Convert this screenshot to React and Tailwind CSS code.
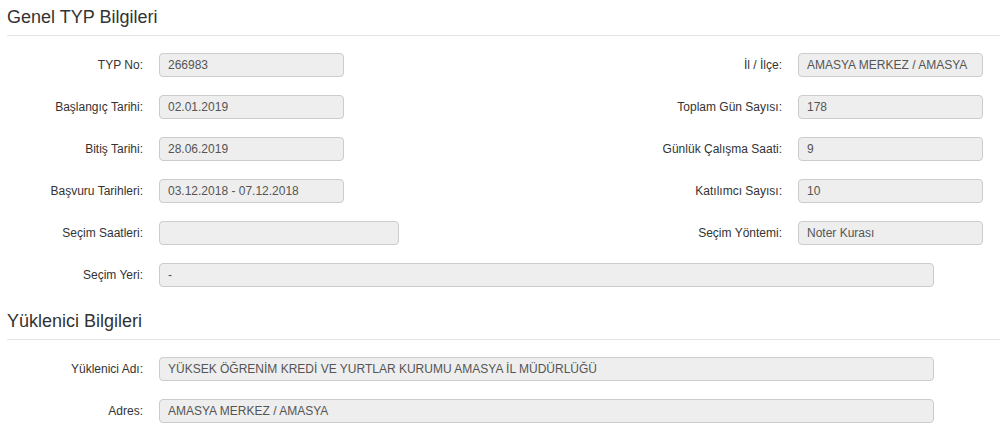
const LEFT = [
  { label: "TYP No:", value: "266983" },
  { label: "Başlangıç Tarihi:", value: "02.01.2019" },
  { label: "Bitiş Tarihi:", value: "28.06.2019" },
  { label: "Başvuru Tarihleri:", value: "03.12.2018 - 07.12.2018" },
  { label: "Seçim Saatleri:", value: "", wide: true },
];

const RIGHT = [
  { label: "İl / İlçe:", value: "AMASYA MERKEZ / AMASYA" },
  { label: "Toplam Gün Sayısı:", value: "178" },
  { label: "Günlük Çalışma Saati:", value: "9" },
  { label: "Katılımcı Sayısı:", value: "10" },
  { label: "Seçim Yöntemi:", value: "Noter Kurası" },
];

function Field({ value, className }) {
  return (
    <div
      className={
        "h-[24px] bg-[#eeeeee] border border-[#cccccc] rounded-[4px] px-[8px] flex items-center text-[12px] text-[#555555] whitespace-nowrap overflow-hidden " +
        className
      }
    >
      {value}
    </div>
  );
}

function Label({ children, className }) {
  return <div className={"text-right text-[12px] text-[#333333] pr-[16px] shrink-0 " + className}>{children}</div>;
}

function SectionTitle({ children }) {
  return (
    <div className="pl-[7px]">
      <h4 className="text-[18px] leading-[22px] text-[#333333] pt-[6px] pb-[7px]">{children}</h4>
      <div className="h-px bg-[#e5e5e5]" />
    </div>
  );
}

export default function App() {
  return (
    <div className="w-[1000px] h-[437px] bg-white overflow-hidden" style={{ fontFamily: '"Liberation Sans", Arial, sans-serif' }}>
      <SectionTitle>Genel TYP Bilgileri</SectionTitle>

      <div className="pt-[17px] flex flex-col gap-[18px]">
        {LEFT.map((l, i) => (
          <div key={l.label} className="flex items-center">
            <div className="w-[500px] flex items-center">
              <Label className="w-[159px]">{l.label}</Label>
              <Field value={l.value} className={l.wide ? "w-[240px]" : "w-[185px]"} />
            </div>
            <div className="flex items-center">
              <Label className="w-[298px]">{RIGHT[i].label}</Label>
              <Field value={RIGHT[i].value} className="w-[185px]" />
            </div>
          </div>
        ))}
        <div className="flex items-center">
          <Label className="w-[159px]">Seçim Yeri:</Label>
          <Field value="-" className="w-[775px]" />
        </div>
      </div>

      <div className="mt-[17px]">
        <SectionTitle>Yüklenici Bilgileri</SectionTitle>
      </div>

      <div className="pt-[17px] flex flex-col gap-[18px]">
        <div className="flex items-center">
          <Label className="w-[159px]">Yüklenici Adı:</Label>
          <Field value="YÜKSEK ÖĞRENİM KREDİ VE YURTLAR KURUMU AMASYA İL MÜDÜRLÜĞÜ" className="w-[775px]" />
        </div>
        <div className="flex items-center">
          <Label className="w-[159px]">Adres:</Label>
          <Field value="AMASYA MERKEZ / AMASYA" className="w-[775px]" />
        </div>
      </div>
    </div>
  );
}
